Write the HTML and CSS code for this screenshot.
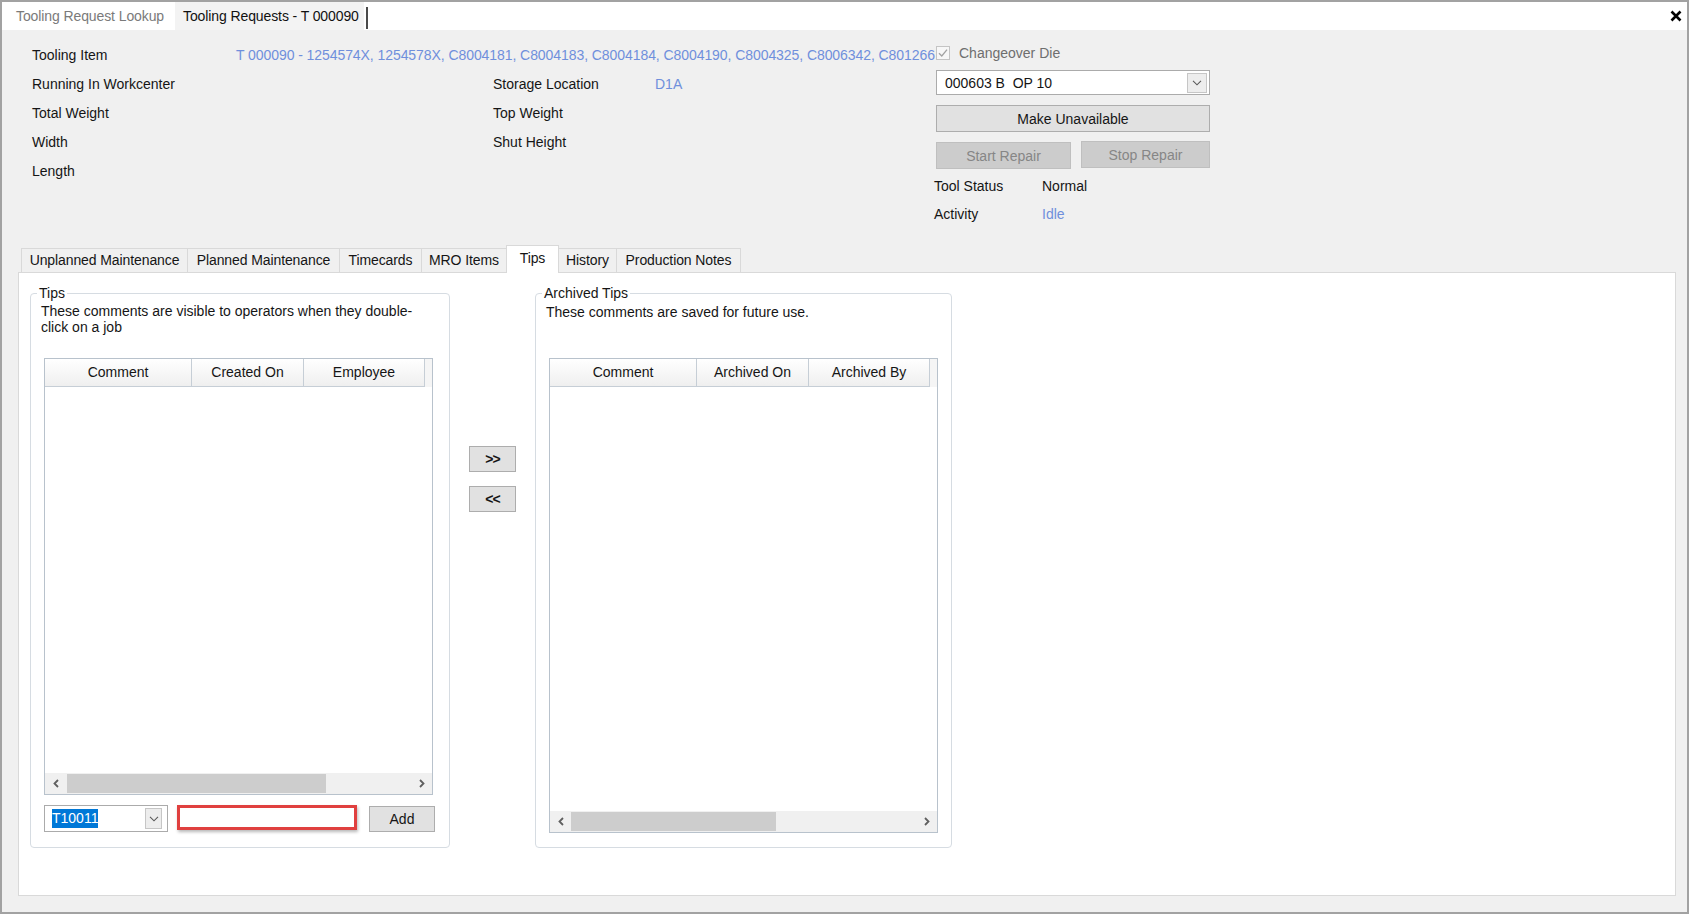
FILE: index.html
```html
<!DOCTYPE html>
<html>
<head>
<meta charset="utf-8">
<title>Tooling Requests - T 000090</title>
<link rel="stylesheet" href="styles.css">
</head>
<body>
<div class="window">
  <div class="doc-tabs">
    <div class="doc-tab first">Tooling Request Lookup</div>
    <div class="doc-tab active">Tooling Requests - T 000090</div>
    <div class="doc-sep"></div>
    <div class="spacer"></div>
    <svg class="close" width="12" height="12" viewBox="0 0 12 12"><path d="M1.5 1.5 L10.5 10.5 M10.5 1.5 L1.5 10.5" stroke="#000" stroke-width="2.6" fill="none"/></svg>
  </div>

  <div class="main">
    <div class="info">
      <div class="fields">
        <div class="lbl">Tooling Item</div>
        <div class="val link wide-val">T 000090 - 1254574X, 1254578X, C8004181, C8004183, C8004184, C8004190, C8004325, C8006342, C801266</div>

        <div class="lbl">Running In Workcenter</div>
        <div class="val"></div>
        <div class="lbl">Storage Location</div>
        <div class="val link">D1A</div>

        <div class="lbl">Total Weight</div>
        <div class="val"></div>
        <div class="lbl">Top Weight</div>
        <div class="val"></div>

        <div class="lbl">Width</div>
        <div class="val"></div>
        <div class="lbl">Shut Height</div>
        <div class="val"></div>

        <div class="lbl">Length</div>
      </div>

      <div class="actions">
        <div class="check-row">
          <svg class="checkbox" width="14" height="14" viewBox="0 0 14 14"><rect x="0.5" y="0.5" width="13" height="13" fill="#f7f7f7" stroke="#c4c4c4"/><path d="M3 7.2 L5.8 10 L11 3.6" fill="none" stroke="#a2a2a2" stroke-width="1.3"/></svg>
          <span class="disabled-text">Changeover Die</span>
        </div>
        <div class="combo combo-wide">
          <span class="combo-text">000603 B  OP 10</span>
          <span class="combo-btn"><svg width="10" height="6" viewBox="0 0 10 6"><path d="M1 0.8 L5 4.8 L9 0.8" fill="none" stroke="#5a5a5a" stroke-width="1.1"/></svg></span>
        </div>
        <button class="btn btn-make">Make Unavailable</button>
        <div class="repair-row">
          <button class="btn disabled btn-start">Start Repair</button>
          <button class="btn disabled btn-stop">Stop Repair</button>
        </div>
        <div class="status-row"><span class="st-lbl">Tool Status</span><span>Normal</span></div>
        <div class="status-row"><span class="st-lbl">Activity</span><span class="link">Idle</span></div>
      </div>
    </div>

    <div class="tabstrip">
      <div class="tab w-unplanned">Unplanned Maintenance</div>
      <div class="tab w-planned">Planned Maintenance</div>
      <div class="tab w-time">Timecards</div>
      <div class="tab w-mro">MRO Items</div>
      <div class="tab active w-tips">Tips</div>
      <div class="tab w-hist">History</div>
      <div class="tab w-notes">Production Notes</div>
    </div>

    <div class="panel">
      <fieldset class="group group-tips">
        <legend>Tips</legend>
        <div class="desc">These comments are visible to operators when they double-<br>click on a job</div>
        <div class="grid grid-tips">
          <div class="grid-head">
            <div class="hcell c1">Comment</div>
            <div class="hcell c2">Created On</div>
            <div class="hcell c3">Employee</div>
            <div class="hfill"></div>
          </div>
          <div class="grid-body"></div>
          <div class="hscroll">
            <div class="sb-arrow"><svg width="6" height="9" viewBox="0 0 6 9"><path d="M5 1 L1.5 4.5 L5 8" fill="none" stroke="#5f5f5f" stroke-width="1.8"/></svg></div>
            <div class="sb-track"><div class="thumb thumb-tips"></div></div>
            <div class="sb-arrow"><svg width="6" height="9" viewBox="0 0 6 9"><path d="M1 1 L4.5 4.5 L1 8" fill="none" stroke="#5f5f5f" stroke-width="1.8"/></svg></div>
          </div>
        </div>
        <div class="bottom-row">
          <div class="combo combo-small">
            <span class="combo-text"><span class="selected">T10011</span></span>
            <span class="combo-btn small-btn"><svg width="10" height="6" viewBox="0 0 10 6"><path d="M1 0.8 L5 4.8 L9 0.8" fill="none" stroke="#5a5a5a" stroke-width="1.1"/></svg></span>
          </div>
          <div class="redbox"></div>
          <button class="btn btn-add">Add</button>
        </div>
      </fieldset>

      <div class="move-buttons">
        <button class="btn btn-move">&gt;&gt;</button>
        <button class="btn btn-move">&lt;&lt;</button>
      </div>

      <fieldset class="group group-arch">
        <legend>Archived Tips</legend>
        <div class="desc desc-arch">These comments are saved for future use.</div>
        <div class="grid grid-arch">
          <div class="grid-head">
            <div class="hcell c1">Comment</div>
            <div class="hcell c2">Archived On</div>
            <div class="hcell c3">Archived By</div>
            <div class="hfill"></div>
          </div>
          <div class="grid-body"></div>
          <div class="hscroll">
            <div class="sb-arrow"><svg width="6" height="9" viewBox="0 0 6 9"><path d="M5 1 L1.5 4.5 L5 8" fill="none" stroke="#5f5f5f" stroke-width="1.8"/></svg></div>
            <div class="sb-track"><div class="thumb thumb-arch"></div></div>
            <div class="sb-arrow"><svg width="6" height="9" viewBox="0 0 6 9"><path d="M1 1 L4.5 4.5 L1 8" fill="none" stroke="#5f5f5f" stroke-width="1.8"/></svg></div>
          </div>
        </div>
      </fieldset>
    </div>
  </div>
</div>
</body>
</html>
```

FILE: styles.css
```css
* { box-sizing: border-box; }
html, body { margin: 0; padding: 0; }
body {
  font-family: "Liberation Sans", Arial, sans-serif;
  font-size: 14px;
  color: #151515;
  background: #ffffff;
}

.window {
  width: 1689px;
  height: 914px;
  border: 2px solid #a2a2a2;
  background: #f0f0f0;
  display: flex;
  flex-direction: column;
  overflow: hidden;
}

/* document tabs */
.doc-tabs {
  height: 28px;
  background: #ffffff;
  display: flex;
  align-items: stretch;
  flex: none;
}
.doc-tab {
  line-height: 28px;
  white-space: nowrap;
  letter-spacing: -0.1px;
}
.doc-tab.first {
  width: 173px;
  padding-left: 14px;
  color: #7a7a7a;
}
.doc-tab.active {
  width: 189px;
  padding-left: 8px;
  background: #f3f3f3;
  color: #111;
}
.doc-sep {
  width: 2px;
  height: 22px;
  margin: 5px 0 0 2px;
  background: #4a4a4a;
}
.spacer { flex: 1; }
.close {
  margin: 8px 5px 0 0;
}

/* main */
.main {
  flex: 1;
  display: flex;
  flex-direction: column;
}

.info {
  height: 215px;
  display: flex;
  padding-left: 30px;
  flex: none;
}
.fields {
  width: 904px;
  margin-top: 10px;
  display: grid;
  grid-template-columns: 204px 257px 162px 281px;
  grid-auto-rows: 29px;
  align-items: center;
  align-content: start;
}
.lbl, .val { white-space: nowrap; }
.wide-val {
  grid-column: 2 / 5;
  letter-spacing: -0.07px;
}
.link { color: #6f8fdc; }

.actions {
  width: 274px;
  margin-top: 13px;
  display: flex;
  flex-direction: column;
}
.check-row {
  height: 20px;
  display: flex;
  align-items: center;
}
.checkbox { flex: none; }
.disabled-text {
  margin-left: 9px;
  color: #6e6e6e;
}

.combo {
  background: #ffffff;
  border: 1px solid #ababab;
  display: flex;
  align-items: center;
}
.combo-wide {
  margin-top: 7px;
  height: 25px;
  width: 274px;
  padding-left: 8px;
}
.combo-text {
  flex: 1;
  white-space: pre;
}
.combo-btn {
  width: 20px;
  height: 20px;
  margin-right: 2px;
  border: 1px solid #c6c6c6;
  background: #ededed;
  display: flex;
  align-items: center;
  justify-content: center;
}

.btn {
  font-family: "Liberation Sans", Arial, sans-serif;
  font-size: 14px;
  color: #151515;
  background: #e1e1e1;
  border: 1px solid #adadad;
  padding: 0;
  margin: 0;
  height: 27px;
}
.btn.disabled {
  background: #cccccc;
  border-color: #bfbfbf;
  color: #868686;
}
.btn-make {
  width: 274px;
  margin-top: 10px;
}
.repair-row {
  margin-top: 10px;
  display: flex;
  align-items: flex-start;
}
.btn-start { width: 135px; }
.btn-stop { width: 129px; margin-left: 10px; margin-top: -1px; }

.status-row {
  height: 22px;
  margin-top: 6px;
  margin-left: -2px;
  display: flex;
  align-items: center;
}
.st-lbl { width: 108px; }

/* tab strip */
.tabstrip {
  height: 27px;
  padding-left: 19px;
  display: flex;
  align-items: flex-end;
  position: relative;
  z-index: 1;
  flex: none;
}
.tab {
  height: 24px;
  line-height: 23px;
  text-align: center;
  white-space: nowrap;
  background: #f0f0f0;
  border: 1px solid #d9d9d9;
  border-bottom: none;
  margin-right: -1px;
  letter-spacing: -0.1px;
}
.tab.active {
  height: 28px;
  line-height: 24px;
  background: #ffffff;
  margin-bottom: -1px;
  position: relative;
  z-index: 2;
}
.w-unplanned { width: 167px; }
.w-planned { width: 153px; }
.w-time { width: 83px; }
.w-mro { width: 86px; }
.w-tips { width: 53px; }
.w-hist { width: 59px; }
.w-notes { width: 125px; }

/* panel */
.panel {
  margin-left: 16px;
  width: 1658px;
  height: 624px;
  background: #ffffff;
  border: 1px solid #d9d9d9;
  padding: 12px 11px 11px 11px;
  display: flex;
  align-items: flex-start;
  flex: none;
}

.group {
  margin: 0;
  padding: 2px 0 0 0;
  border: 1px solid #d6dce2;
  border-radius: 4px;
  height: 563px;
  min-width: 0;
}
.group legend {
  margin-left: 6px;
  padding: 0 2px;
  line-height: 16px;
}
.group-tips { width: 420px; }
.group-arch { width: 417px; margin-left: 19px; }

.desc {
  margin-left: 10px;
  height: 32px;
  line-height: 16px;
  white-space: nowrap;
}
.desc-arch { padding-top: 1px; }

.grid {
  margin-left: 13px;
  margin-top: 23px;
  width: 389px;
  border: 1px solid #b8c2cc;
  background: #ffffff;
  display: flex;
  flex-direction: column;
}
.grid-tips { height: 437px; }
.grid-arch { height: 475px; }

.grid-head {
  height: 28px;
  display: flex;
  flex: none;
}
.hcell {
  height: 28px;
  line-height: 27px;
  text-align: center;
  white-space: nowrap;
  background: linear-gradient(#ffffff, #efefef);
  border-right: 1px solid #c6ced6;
  border-bottom: 1px solid #c6ced6;
}
.c1 { width: 147px; }
.c2 { width: 112px; }
.c3 { width: 121px; }
.hfill {
  flex: 1;
  background: #f5f5f5;
}
.grid-body { flex: 1; }

.hscroll {
  height: 21px;
  display: flex;
  background: #f0f0f0;
  flex: none;
}
.sb-arrow {
  width: 21px;
  display: flex;
  align-items: center;
  justify-content: center;
}
.sb-track {
  flex: 1;
  padding: 1px 0;
  display: flex;
}
.thumb { background: #cdcdcd; height: 100%; }
.thumb-tips { width: 259px; margin-left: 1px; }
.thumb-arch { width: 205px; }

.bottom-row {
  margin-left: 13px;
  margin-top: 10px;
  display: flex;
  align-items: flex-start;
}
.combo-small {
  width: 124px;
  height: 27px;
  padding-left: 7px;
  align-items: flex-start;
}
.combo-small .combo-text { padding-top: 3px; }
.selected {
  display: inline-block;
  background: #0078d7;
  color: #ffffff;
  line-height: 19px;
  height: 19px;
}
.small-btn {
  width: 17px;
  height: 21px;
  margin: 2px 5px 0 0;
}
.redbox {
  margin-left: 9px;
  width: 180px;
  height: 25px;
  border: 3px solid #e0403f;
  background: #ffffff;
  box-shadow: 1px 2px 3px rgba(0, 0, 0, 0.28);
}
.btn-add {
  margin-left: 12px;
  margin-top: 1px;
  width: 66px;
  height: 26px;
}

.move-buttons {
  margin-left: 19px;
  padding-top: 161px;
  display: flex;
  flex-direction: column;
  gap: 14px;
}
.btn-move {
  width: 47px;
  height: 26px;
  font-weight: bold;
  letter-spacing: -1px;
}
```
